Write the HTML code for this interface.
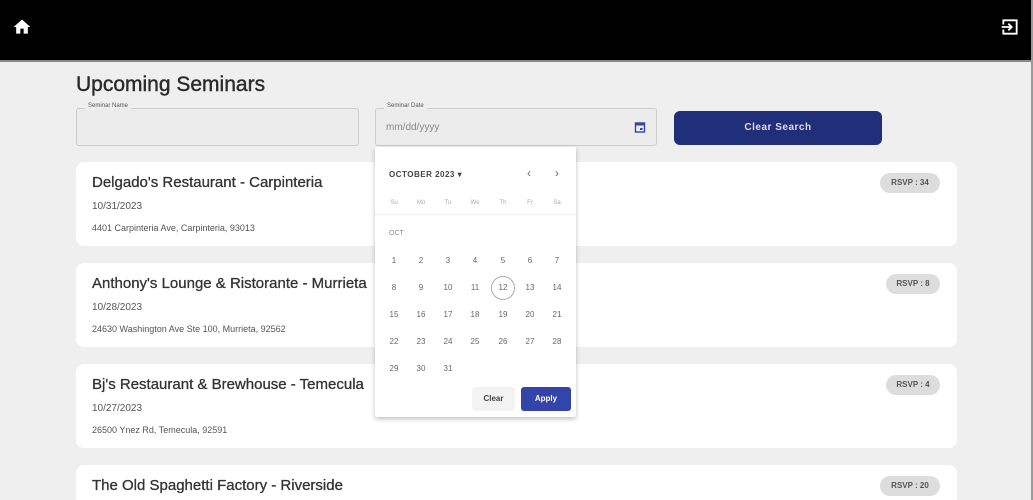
<!DOCTYPE html>
<html><head><style>
*{box-sizing:border-box;margin:0;padding:0}
html,body{width:1033px;height:500px;overflow:hidden}
body{background:#efefef;font-family:"Liberation Sans",Arial,sans-serif;position:relative;color:#333}
.hdr{position:absolute;left:0;top:0;width:1033px;height:62px;background:#000;border-bottom:2px solid #888}
.rline{position:absolute;right:0;top:0;width:2px;height:500px;background:#999}
h1{position:absolute;left:76px;top:73px;font-size:21px;font-weight:normal;color:#2a2a2a;-webkit-text-stroke:0.4px #2a2a2a}
.fld{position:absolute;top:108px;height:38px;border:1px solid #ccc;border-radius:3px;background:#ececec}
.fld span.l{position:absolute;top:-6px;left:8px;font-size:6px;color:#555;background:#efefef;padding:0 3px}
.btn{position:absolute;left:674px;top:111px;width:208px;height:34px;background:#1f2f7a;border-radius:6px;color:#dde;font-size:10px;font-weight:bold;text-align:center;line-height:34px;letter-spacing:0.5px}
.card{position:absolute;left:76px;width:881px;height:84px;background:#fff;border-radius:8px}
.card .t{position:absolute;left:16px;top:12px;font-size:15px;color:#333;-webkit-text-stroke:0.3px #333}
.card .d{position:absolute;left:16px;top:39px;font-size:10px;color:#555}
.card .a{position:absolute;left:16px;top:61px;font-size:9px;color:#555}
.rsvp{position:absolute;top:11px;height:20px;background:#ddd;border-radius:10px;font-size:8px;color:#555;line-height:20px;text-align:center;font-weight:bold}
.cal{position:absolute;left:375px;top:147px;width:201px;height:270px;background:#fff;box-shadow:0 2px 5px rgba(0,0,0,.25);border-radius:2px}
.cal .g{position:absolute;font-size:8px;color:#666;width:20px;text-align:center}
.cal .w{position:absolute;font-size:6px;color:#aaa;width:20px;text-align:center;top:53px}
</style></head><body>
<div class="hdr">
<svg style="position:absolute;left:12px;top:17px" width="20" height="20" viewBox="0 0 24 24"><path d="M10 20v-6h4v6h5v-8h3L12 3 2 12h3v8z" fill="#fff"/></svg>
<svg style="position:absolute;left:1000px;top:17px" width="20" height="20" viewBox="0 0 24 24"><path d="M4 9V4h16v16H4v-5" fill="none" stroke="#fff" stroke-width="2.2"/><path d="M2 12h11M10 8l4 4-4 4" fill="none" stroke="#fff" stroke-width="2.2"/></svg>
</div>
<div class="rline"></div>
<h1>Upcoming Seminars</h1>
<div class="fld" style="left:76px;width:283px"><span class="l">Seminar Name</span></div>
<div class="fld" style="left:375px;width:282px"><span class="l">Seminar Date</span><span style="position:absolute;left:10px;top:13px;font-size:10px;color:#888">mm/dd/yyyy</span>
<svg style="position:absolute;left:258px;top:12px" width="12" height="12" viewBox="0 0 12 12"><rect x="1.5" y="2" width="9" height="9" fill="none" stroke="#3344aa" stroke-width="1.4"/><rect x="1.5" y="2" width="9" height="2.5" fill="#3344aa"/><rect x="6" y="7" width="2.5" height="2" fill="#3344aa"/></svg></div>
<div class="btn">Clear Search</div>

<div class="card" style="top:162px"><div class="t">Delgado's Restaurant - Carpinteria</div><div class="d">10/31/2023</div><div class="a">4401 Carpinteria Ave, Carpinteria, 93013</div><div class="rsvp" style="left:804px;width:60px">RSVP : 34</div></div>
<div class="card" style="top:263px"><div class="t">Anthony's Lounge &amp; Ristorante - Murrieta</div><div class="d">10/28/2023</div><div class="a">24630 Washington Ave Ste 100, Murrieta, 92562</div><div class="rsvp" style="left:810px;width:54px">RSVP : 8</div></div>
<div class="card" style="top:364px"><div class="t">Bj's Restaurant &amp; Brewhouse - Temecula</div><div class="d">10/27/2023</div><div class="a">26500 Ynez Rd, Temecula, 92591</div><div class="rsvp" style="left:810px;width:54px">RSVP : 4</div></div>
<div class="card" style="top:465px;height:35px;border-radius:8px 8px 0 0"><div class="t">The Old Spaghetti Factory - Riverside</div><div class="rsvp" style="left:804px;width:60px">RSVP : 20</div></div>

<div class="cal">
<div style="position:absolute;left:14px;top:23px;font-size:8px;font-weight:bold;color:#444;letter-spacing:.5px">OCTOBER 2023 ▾</div>
<div style="position:absolute;left:152px;top:19px;font-size:12px;color:#666">‹</div>
<div style="position:absolute;left:180px;top:19px;font-size:12px;color:#666">›</div>
<div class="w" style="left:9px">Su</div><div class="w" style="left:36px">Mo</div><div class="w" style="left:63px">Tu</div><div class="w" style="left:90px">We</div><div class="w" style="left:118px">Th</div><div class="w" style="left:145px">Fr</div><div class="w" style="left:172px">Sa</div>
<div style="position:absolute;left:0;top:67px;width:201px;height:1px;background:#eee"></div>
<div style="position:absolute;left:14px;top:83px;font-size:7px;color:#888">OCT</div>
<div class="g" style="left:9px;top:109px">1</div><div class="g" style="left:36px;top:109px">2</div><div class="g" style="left:63px;top:109px">3</div><div class="g" style="left:90px;top:109px">4</div><div class="g" style="left:118px;top:109px">5</div><div class="g" style="left:145px;top:109px">6</div><div class="g" style="left:172px;top:109px">7</div>
<div class="g" style="left:9px;top:136px">8</div><div class="g" style="left:36px;top:136px">9</div><div class="g" style="left:63px;top:136px">10</div><div class="g" style="left:90px;top:136px">11</div><div class="g" style="left:118px;top:136px">12</div><div style="position:absolute;left:116px;top:129px;width:24px;height:24px;border:1px solid #aaa;border-radius:50%"></div><div class="g" style="left:145px;top:136px">13</div><div class="g" style="left:172px;top:136px">14</div>
<div class="g" style="left:9px;top:163px">15</div><div class="g" style="left:36px;top:163px">16</div><div class="g" style="left:63px;top:163px">17</div><div class="g" style="left:90px;top:163px">18</div><div class="g" style="left:118px;top:163px">19</div><div class="g" style="left:145px;top:163px">20</div><div class="g" style="left:172px;top:163px">21</div>
<div class="g" style="left:9px;top:190px">22</div><div class="g" style="left:36px;top:190px">23</div><div class="g" style="left:63px;top:190px">24</div><div class="g" style="left:90px;top:190px">25</div><div class="g" style="left:118px;top:190px">26</div><div class="g" style="left:145px;top:190px">27</div><div class="g" style="left:172px;top:190px">28</div>
<div class="g" style="left:9px;top:217px">29</div><div class="g" style="left:36px;top:217px">30</div><div class="g" style="left:63px;top:217px">31</div>
<div style="position:absolute;left:97px;top:240px;width:43px;height:24px;background:#f3f3f3;border-radius:3px;font-size:8px;font-weight:bold;color:#444;text-align:center;line-height:24px">Clear</div>
<div style="position:absolute;left:146px;top:240px;width:50px;height:24px;background:#3344aa;border-radius:3px;font-size:8px;font-weight:bold;color:#fff;text-align:center;line-height:24px">Apply</div>
</div>
</body></html>
